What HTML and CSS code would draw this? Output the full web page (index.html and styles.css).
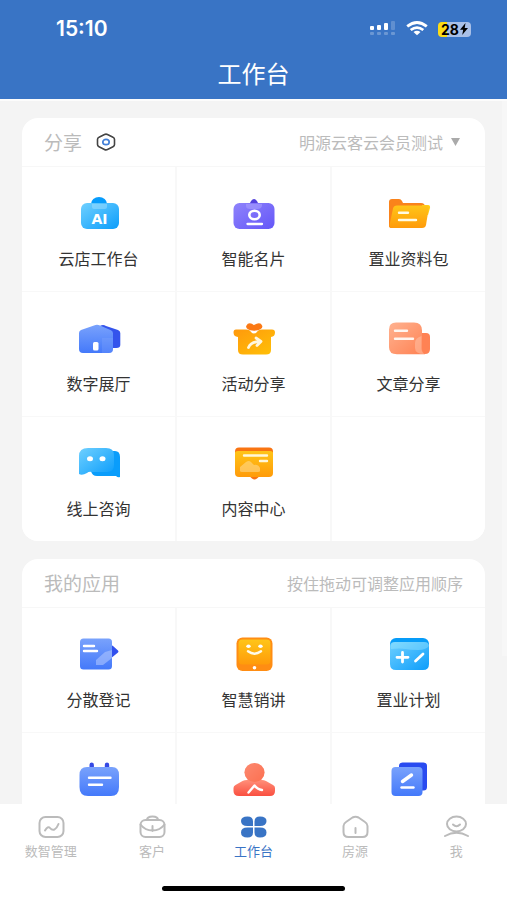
FILE: index.html
```html
<!DOCTYPE html>
<html lang="zh-CN">
<head>
<meta charset="utf-8">
<meta name="viewport" content="width=device-width, initial-scale=1">
<title>工作台</title>
<link rel="stylesheet" href="styles.css">
</head>
<body>
<svg class="defs" width="0" height="0" aria-hidden="true">
  <defs>
    <linearGradient id="cyan" x1="0" y1="0" x2="1" y2="1"><stop offset="0" stop-color="#6fd0ff"/><stop offset="1" stop-color="#0c9dfb"/></linearGradient>
    <linearGradient id="violet" x1="0" y1="0" x2="1" y2="1"><stop offset="0" stop-color="#8f83fb"/><stop offset="1" stop-color="#6456f8"/></linearGradient>
    <linearGradient id="blue" x1="0" y1="0" x2="0" y2="1"><stop offset="0" stop-color="#79a2fc"/><stop offset="1" stop-color="#4479fa"/></linearGradient>
    <linearGradient id="yellow" x1="0" y1="0" x2="0" y2="1"><stop offset="0" stop-color="#ffc518"/><stop offset="1" stop-color="#ff9b0a"/></linearGradient>
    <linearGradient id="amber" x1="0" y1="0" x2="1" y2="1"><stop offset="0" stop-color="#ff990c"/><stop offset="1" stop-color="#ffc107"/></linearGradient>
    <linearGradient id="peach" x1="0" y1="0" x2="1" y2="1"><stop offset="0" stop-color="#ffb290"/><stop offset="1" stop-color="#ff8152"/></linearGradient>
    <linearGradient id="red" x1="0" y1="0" x2="0" y2="1"><stop offset="0" stop-color="#ff8f79"/><stop offset="1" stop-color="#fa4f40"/></linearGradient>
  </defs>
</svg>
<div class="app">
  <header class="top">
    <div class="status">
      <span class="time">15:10</span>
      <span class="indicators">
        <svg width="26" height="16" viewBox="0 0 26 16" fill="#fff"><rect x="0" y="5" width="4" height="4" rx="1"/><rect x="7" y="4" width="4" height="5" rx="1"/><rect x="14" y="2" width="4" height="7" rx="1"/><rect x="21" y="0" width="4" height="9" rx="1" opacity=".2"/><g opacity=".25"><rect x="0" y="11" width="4" height="3" rx="1"/><rect x="7" y="11" width="4" height="3" rx="1"/><rect x="14" y="11" width="4" height="3" rx="1"/><rect x="21" y="11" width="4" height="3" rx="1"/></g></svg>
        <svg width="22" height="16" viewBox="0 0 22 16" fill="none" stroke="#fff" stroke-width="2.8"><path d="M1.200 5.400Q11-2.400 20.800 5.400M4.700 9Q11 4.200 17.300 9"/><path d="M11 14.200 7.500 11Q11 8.400 14.500 11Z" fill="#fff" stroke="none"/></svg>
        <span class="battery"><span>28</span><svg width="8" height="12" viewBox="0 0 8 12"><path d="M5.500 0 0 6.800h3.200L2.200 12 8 5H4.700Z" fill="#000"/></svg></span>
      </span>
    </div>
    <h1>工作台</h1>
  </header>

  <main class="content">
    <section class="card">
      <div class="card-head">
        <h2>分享</h2>
        <button class="settings" aria-label="设置"><svg width="20" height="18" viewBox="0 0 20 18" fill="none"><path d="M8.500 1.500Q10 .7 11.500 1.500L17 4.300Q18.500 5 18.500 6.500V11.500Q18.500 13 17 13.700L11.500 16.500Q10 17.300 8.500 16.500L3 13.700Q1.500 13 1.500 11.500V6.500Q1.500 5 3 4.300Z" stroke="#444" stroke-width="1.600"/><ellipse cx="10" cy="9" rx="3.200" ry="2.700" stroke="#4380d8" stroke-width="1.700"/></svg></button>
        <button class="account">明源云客云会员测试<svg width="9" height="8" viewBox="0 0 9 8"><path d="M0 0H9L4.500 8Z" fill="#aaa"/></svg></button>
      </div>
      <div class="grid">
        <button class="cell"><svg class="icon" viewBox="0 0 44 36"><ellipse cx="22" cy="8" rx="8" ry="7" fill="#079cfc"/><rect x="4" y="7" width="38" height="26" rx="6" fill="url(#cyan)"/><path d="M15 8h15v3q0 2-2 2H17q-2 0-2-2Z" fill="#a9e2ff" opacity=".45"/><text class="icon-text" x="22.500" y="28" text-anchor="middle">AI</text></svg><span>云店工作台</span></button>
        <button class="cell"><svg class="icon" viewBox="0 0 44 36"><path d="M14 9q4-1 5-4 3-4 6 0 1 3 5 4Z" fill="#5341dc"/><rect x="1.500" y="7" width="41" height="26" rx="6" fill="url(#violet)"/><path d="M14 8h16v2q-1 3-4 3h-8q-4 0-4-3Z" fill="#c4baff" opacity=".35"/><ellipse cx="22.500" cy="19" rx="5.200" ry="4.300" fill="none" stroke="#fff" stroke-width="2.600"/><path d="M15.500 28h14.500" stroke="#fff" stroke-width="2.300" stroke-linecap="round"/></svg><span>智能名片</span></button>
        <button class="cell"><svg class="icon" viewBox="0 0 44 36"><path d="M2 30V6q0-3 3-3h7q2 0 3 2l1 2h18q4 0 4 4v10L5 32Q2 32 2 30Z" fill="#fa831b"/><path d="M35 9h6q2.500 0 2 3l-2 7H35Z" fill="#ffcf18"/><path d="M10 9.500h29q3 0 2.700 3L39 29q-.5 3-4 3H5q-3 0-2.500-3L6 12.500q.7-3 4-3Z" fill="url(#yellow)"/><path d="M12 16.700h9M12 24h17" stroke="#fffbe5" stroke-width="2.400" stroke-linecap="round"/></svg><span>置业资料包</span></button>
        <button class="cell"><svg class="icon" viewBox="0 0 44 36"><path d="M23 5q3-2 6 0l12 4q2.300 1 2.300 3v12q0 3-4 3H31Z" fill="#3454ec"/><path d="M17 4.500q3-1.500 6 0l11 4.700q2 1 2 3V28q0 4-4 4H6q-4 0-4-4V12q0-2 2-3Z" fill="url(#blue)"/><path d="M25 17h11v11q0 4-4 4h-7Z" fill="#97b6ff" opacity=".2"/><rect x="16" y="21" width="5.500" height="8.500" rx="1.500" fill="#fff"/></svg><span>数字展厅</span></button>
        <button class="cell"><svg class="icon" viewBox="0 0 44 36"><path d="M22 9q-8-1-7-4 2-4 7 0 6-4 7.500 0 1 3-7.500 4Z" fill="#fb7914" stroke="#fb7914" stroke-width="1.500"/><path d="M4 8.500h10q4 0 5 2.500 3 3 6 0 1-2.500 5-2.500h10q3 0 3 3 0 4-4 4.500V29q0 4.500-5 4.500H11q-5 0-5-4.500V16q-4.500-.5-4.500-4.500 0-3 2.500-3Z" fill="url(#amber)"/><path d="M16.500 26.500Q19 20.500 28 20.500M24 17l5 3.500-4 4" fill="none" stroke="#fff7df" stroke-width="2.800" stroke-linecap="round" stroke-linejoin="round"/></svg><span>活动分享</span></button>
        <button class="cell"><svg class="icon" viewBox="0 0 44 36"><path d="M28 12h11q4 0 4 4v12q0 5-5 5H27Z" fill="#ff8254"/><path d="M9 1.500h18q8 0 8 8V28l3 5.300H10q-8 0-8-7V8.500q0-7 7-7Z" fill="url(#peach)"/><path d="M28 22q0-5 6.500-7v12q0 4 3 6-9.500 0-9.500-6Z" fill="#ffc6ac" opacity=".5"/><path d="M8 9.700h12M8 17.700h18" stroke="#fff5ef" stroke-width="2.400" stroke-linecap="round"/></svg><span>文章分享</span></button>
        <button class="cell"><svg class="icon" viewBox="0 0 44 36"><path d="M22 5h16q5 0 5 6v20q-2 1-4-1H20q-5 0-6-5Z" fill="#0a9dfb"/><path d="M11 2h18q8 0 8 7v10q0 7-7 7H15q-3-1-5 1-5 3-8 1V10q0-8 9-8Z" fill="url(#cyan)"/><ellipse cx="13" cy="12.700" rx="3" ry="2.500" fill="#fff"/><ellipse cx="25.500" cy="12.700" rx="3" ry="2.500" fill="#fff"/></svg><span>线上咨询</span></button>
        <button class="cell"><svg class="icon" viewBox="0 0 44 36"><path d="M7 1.500h30q4 0 4 4V11H3V5.500q0-4 4-4ZM15 28h15l-5 4.500q-2.500 2-5 0Z" fill="#f97412"/><path d="M6 5h32q3 0 3 2v20q0 4-4 4H7q-4 0-4-4V7q0-2 3-2Z" fill="url(#yellow)"/><path d="M8 25v-4l6-5q3-2 5 0l3 3q4-1 6 3v3q0 1-2 1H10q-2 0-2-1Z" fill="#ffd98a" opacity=".6"/><path d="M12 9.500h23M28 15h7" stroke="#fff7da" stroke-width="2.400" stroke-linecap="round"/></svg><span>内容中心</span></button>
        <div class="cell"></div>
      </div>
    </section>

    <section class="card">
      <div class="card-head">
        <h2>我的应用</h2>
        <p class="hint">按住拖动可调整应用顺序</p>
      </div>
      <div class="grid">
        <button class="cell"><svg class="icon" viewBox="0 0 44 36"><path d="M33 8q2 0 3 1l5 4.500q1 1 0 2L33 22Z" fill="#3150ee"/><rect x="3" y="1.500" width="32" height="31" rx="3.500" fill="url(#blue)"/><path d="M19 28v-5l9-8 7-2v8l-9 7Z" fill="#aec4ff" opacity=".6"/><path d="M7 9h10M7 14h13" stroke="#fff" stroke-width="2.400" stroke-linecap="round"/></svg><span>分散登记</span></button>
        <button class="cell"><svg class="icon" viewBox="0 0 44 36"><rect x="4.500" y=".5" width="36" height="33.500" rx="6" fill="#ff8d13"/><rect x="6.500" y="2.500" width="32" height="25" rx="4" fill="url(#yellow)"/><ellipse cx="16.500" cy="9.300" rx="2.200" ry="1.800" fill="#fff"/><ellipse cx="28.500" cy="9.300" rx="2.200" ry="1.800" fill="#fff"/><path d="M16 14.300q6.500 4.700 13 0" fill="none" stroke="#fffbe9" stroke-width="2.400" stroke-linecap="round"/><circle cx="22.500" cy="30.700" r="1.800" fill="#fff"/></svg><span>智慧销讲</span></button>
        <button class="cell"><svg class="icon" viewBox="0 0 44 36"><rect x="3" y="1" width="39" height="25" rx="6" fill="#079cf8"/><path d="M8 5h29q5 0 5 5v17q0 6-6 6H9q-6 0-6-6V9q0-4 5-4Z" fill="url(#cyan)"/><path d="M8 5h29q5 0 5 4-3 4-11 4-8 0-13-1-5-1-14 0Q3 5 8 5Z" fill="#a7edff" opacity=".35"/><path d="M10 20.300h11M15.500 15.500v9.500M28.500 24l7.500-7" stroke="#fff" stroke-width="2.800" stroke-linecap="round"/></svg><span>置业计划</span></button>
        <button class="cell"><svg class="icon" viewBox="0 0 44 36"><path d="M14.700 2.700V7M30 2.700V7" stroke="#3549e4" stroke-width="4.400" stroke-linecap="round"/><path d="M10 5h25q7 0 7 8v12q0 9-8 9H11q-8.500 0-8.500-9V13q0-8 7.500-8Z" fill="url(#blue)"/><path d="M12 15.700h21.500M12 22.700h13" stroke="#fff" stroke-width="2.400" stroke-linecap="round"/></svg></button>
        <button class="cell"><svg class="icon" viewBox="0 0 44 36"><path d="M15 18h15q2 0 4 1l7 4q2 1 2 3v3q0 5-5 5H7q-5.500 0-5.500-5v-3q0-2 2-3l7-4q2-1 4.500-1Z" fill="url(#red)"/><ellipse cx="22.500" cy="10.500" rx="10" ry="9.500" fill="url(#peach)"/><ellipse cx="22.500" cy="10.500" rx="10" ry="9.500" fill="#f95f50" opacity=".5"/><path d="m16.500 30.500 6-7q3 4 7.500 4.500" fill="none" stroke="#fff" stroke-width="2.400" stroke-linecap="round" stroke-linejoin="round"/></svg></button>
        <button class="cell"><svg class="icon" viewBox="0 0 44 36"><rect x="12" y=".5" width="28" height="28" rx="3.500" fill="#294bf0"/><rect x="4.500" y="5" width="31" height="29" rx="4" fill="url(#blue)"/><path d="m15.500 19.500 9-6.500" stroke="#fff" stroke-width="3.400" stroke-linecap="round"/><path d="M14.500 25.500h12" stroke="#fff" stroke-width="2.400" stroke-linecap="round"/></svg></button>
      </div>
    </section>
    <span class="scrollbar"></span>
  </main>

  <nav class="tabs">
    <div class="tab-row">
      <a class="tab" href="#"><svg viewBox="0 0 28 24"><rect x="2.500" y="2" width="24" height="20" rx="6"/><path d="M8 15.500q3-5 5-2.500 2 2.500 4.500 1.500 2.500-1.500 4-5.500"/></svg><span>数智管理</span></a>
      <a class="tab" href="#"><svg viewBox="0 0 28 24"><rect x="2.500" y="5" width="24" height="17" rx="5"/><path d="M9 5q0-3.500 5.500-3.500T20 5M2.500 9.500Q7 15.500 14.500 15.500T26.500 9.500M14.500 11v5"/></svg><span>客户</span></a>
      <a class="tab active" href="#" aria-current="page"><svg viewBox="0 0 28 24"><path d="M8.500 1.500q5.500 0 5.500 5V11H8.500q-6.500 0-6.500-5 0-4.500 6.500-4.500ZM21 1.500q-5.500 0-5.500 5V11H21q6.500 0 6.500-5 0-4.500-6.500-4.500ZM8.500 22.500q5.500 0 5.500-5V12.500H8.500q-6.500 0-6.500 5t6.500 5ZM21 22.500q-5.500 0-5.500-5V12.500H21q6.500 0 6.500 5t-6.500 5Z"/></svg><span>工作台</span></a>
      <a class="tab" href="#"><svg viewBox="0 0 28 24"><path d="M11.500 2.500q3-1.500 6 0L24 7q2.500 1.500 2.500 4v6q0 5-5 5h-14q-5 0-5-5v-6q0-2.500 2.500-4ZM14.500 13v5"/></svg><span>房源</span></a>
      <a class="tab" href="#"><svg viewBox="0 0 28 24"><ellipse cx="14.500" cy="9" rx="9.500" ry="7.500"/><path d="M11 9.500q3.500 3.500 7 0M3 21q11.500-6.500 23 0"/></svg><span>我</span></a>
    </div>
    <div class="home-bar"></div>
  </nav>
</div>
</body>
</html>
```
FILE: styles.css
```css
* {
  box-sizing: border-box;
}

body {
  margin: 0;
  font-family: "Noto Sans CJK SC", "Noto Sans", sans-serif;
  color: #333;
  background: #f4f4f4;
}

h1,
h2,
p {
  margin: 0;
  font-weight: 400;
}

button {
  margin: 0;
  padding: 0;
  border: 0;
  background: none;
  font: inherit;
  color: inherit;
}

svg {
  display: block;
}

.defs {
  position: absolute;
}

.app {
  display: flex;
  flex-direction: column;
  height: 100vh;
}

.top {
  flex: none;
  padding-top: 16px;
  color: #fff;
  background: #3974c5;
  border-bottom: 2px solid #fcfcfc;
}

.status {
  display: flex;
  align-items: center;
  justify-content: space-between;
  height: 26px;
  padding: 0 36px 0 56px;
}

.time {
  font: 600 21px/26px Inter, sans-serif;
}

.indicators {
  display: flex;
  align-items: center;
  gap: 10px;
}

.battery {
  display: flex;
  align-items: center;
  justify-content: center;
  gap: 1px;
  width: 33px;
  height: 15px;
  border-radius: 4px;
  font: 700 14px/15px Inter, sans-serif;
  color: #000;
  background: linear-gradient(90deg, #fbdc16 28%, #a9c0e8 28%);
}

.top h1 {
  padding: 14px 0 9px;
  font-size: 24px;
  line-height: 34px;
  text-align: center;
}

.content {
  position: relative;
  flex: 1;
  min-height: 0;
  padding: 17px 22px 0;
  overflow: hidden;
}

.card {
  margin-bottom: 18px;
  overflow: hidden;
  background: #fff;
  border-radius: 16px;
}

.card-head {
  display: flex;
  align-items: center;
  height: 49px;
  padding: 0 22px;
  color: #bbb;
  border-bottom: 1px solid #f7f7f7;
}

.card-head h2 {
  font-size: 19px;
  line-height: 28px;
}

.settings {
  margin-left: 14px;
}

.account,
.hint {
  margin-left: auto;
  font-size: 16px;
  line-height: 24px;
}

.account {
  display: flex;
  align-items: center;
  gap: 8px;
  padding-right: 3px;
}

.grid {
  display: grid;
  grid-template-columns: repeat(3, 1fr);
  gap: 1px 2px;
  background: #f8f8f8;
}

.cell {
  display: flex;
  flex-direction: column;
  align-items: center;
  gap: 16px;
  height: 124px;
  padding-top: 29px;
  font-size: 16px;
  line-height: 20px;
  background: #fff;
}

.icon {
  width: 44px;
  height: 36px;
}

.icon-text {
  font: 700 14px "DejaVu Sans", sans-serif;
  fill: #fff;
}

.scrollbar {
  position: absolute;
  top: 0;
  right: 0;
  width: 5px;
  height: 555px;
  background: #f7f7f7;
}

.tabs {
  flex: none;
  padding: 11px 0 9px;
  background: #fff;
}

.tab-row {
  display: grid;
  grid-template-columns: repeat(5, 1fr);
}

.tab {
  display: flex;
  flex-direction: column;
  align-items: center;
  gap: 3px;
  font-size: 13px;
  line-height: 18px;
  color: #bbb;
  text-decoration: none;
}

.tab svg {
  width: 28px;
  height: 24px;
  fill: none;
  stroke: #bbb;
  stroke-width: 2;
  stroke-linecap: round;
  stroke-linejoin: round;
}

.tab.active {
  color: #3974c5;
}

.tab.active svg {
  fill: #3974c5;
  stroke: none;
}

.home-bar {
  width: 36%;
  height: 5px;
  margin: 26px auto 0;
  background: #000;
  border-radius: 3px;
}
```
